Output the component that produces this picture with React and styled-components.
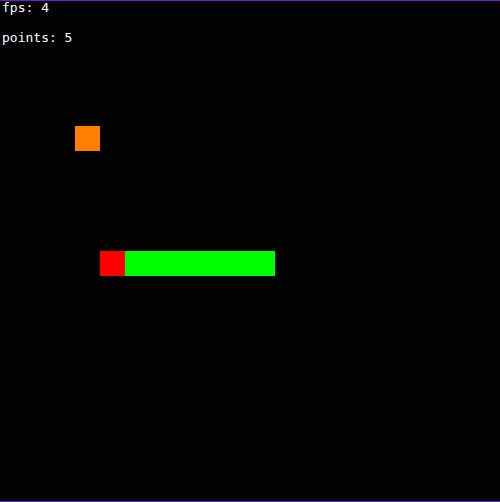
import styled, { createGlobalStyle } from "styled-components";

const GlobalStyle = createGlobalStyle`
  html, body {
    margin: 0;
    padding: 0;
    background: #000;
  }
`;

const CELL = 25;

const food = { x: 3, y: 5 };
const snake = [
  { x: 4, y: 10, head: true },
  { x: 5, y: 10 },
  { x: 6, y: 10 },
  { x: 7, y: 10 },
  { x: 8, y: 10 },
  { x: 9, y: 10 },
  { x: 10, y: 10 },
];

function App() {
  return (
    <>
      <GlobalStyle />
      <Board>
        <Hud>
          <HudLine>fps: 4</HudLine>
          <HudLine>points: 5</HudLine>
        </Hud>
        <Cell $x={food.x} $y={food.y} $color="#ff8000" />
        {snake.map((s, i) => (
          <Cell key={i} $x={s.x} $y={s.y} $color={s.head ? "#ff0000" : "#00ff00"} />
        ))}
      </Board>
    </>
  );
}

export default App;

const Board = styled.div`
  position: relative;
  display: grid;
  grid-template-columns: repeat(20, ${CELL}px);
  grid-template-rows: repeat(20, ${CELL}px);
  width: 500px;
  height: 500px;
  background-color: #030303;
  border-top: 1px solid #6a1fd2;
  border-bottom: 1px solid #6a1fd2;
`;

const Cell = styled.div`
  grid-column: ${(p) => p.$x + 1};
  grid-row: ${(p) => p.$y + 1};
  background-color: ${(p) => p.$color};
`;

const Hud = styled.div`
  position: absolute;
  top: 0;
  left: 2px;
  display: flex;
  flex-direction: column;
  gap: 17px;
  color: #fff;
  font-family: "DejaVu Sans Mono", "Liberation Mono", monospace;
  font-size: 13px;
  line-height: 13px;
  -webkit-font-smoothing: none;
`;

const HudLine = styled.span`
  white-space: pre;
`;
